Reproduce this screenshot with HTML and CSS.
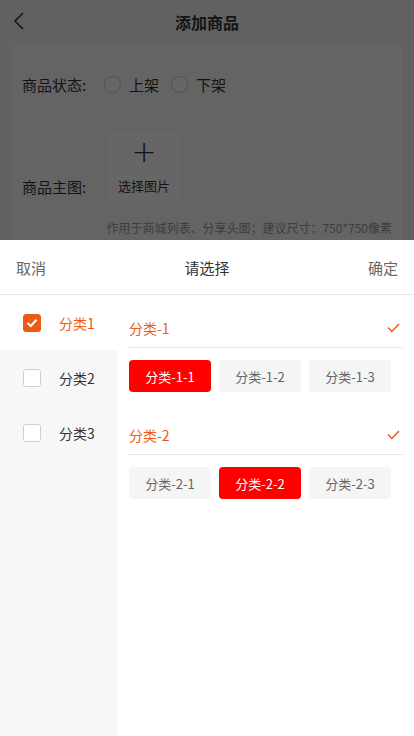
FILE: index.html
```html
<!DOCTYPE html>
<html lang="zh-CN">
<head>
    <meta charset="UTF-8">
    <meta name="viewport" content="width=device-width, initial-scale=1.0">
    <title>添加商品</title>
    <link rel="stylesheet" href="styles.css">
</head>
<body>
    <div class="page">
        <div class="nav-bar">
            <span class="nav-back">
                <svg width="12" height="18" viewBox="0 0 12 18"><polyline points="10,1 2,9 10,17" fill="none" stroke="#333" stroke-width="1.6"/></svg>
            </span>
            <h1 class="nav-title">添加商品</h1>
        </div>
        <div class="form-card">
            <div class="form-row">
                <span class="form-label">商品状态:</span>
                <label class="radio"><span class="radio-dot"></span>上架</label>
                <label class="radio"><span class="radio-dot"></span>下架</label>
            </div>
            <div class="form-row form-row-image">
                <span class="form-label">商品主图:</span>
                <div class="upload-box">
                    <span class="upload-plus">+</span>
                    <span class="upload-text">选择图片</span>
                </div>
            </div>
            <p class="form-hint">作用于商城列表、分享头图；建议尺寸：750*750像素</p>
        </div>
    </div>

    <div class="mask"></div>

    <div class="picker">
        <div class="picker-header">
            <span class="picker-btn">取消</span>
            <span class="picker-title">请选择</span>
            <span class="picker-btn">确定</span>
        </div>
        <div class="picker-body">
            <ul class="side-list" id="side-list"></ul>
            <div class="group-list" id="group-list"></div>
        </div>
    </div>

    <script>
        const categories = [
            { name: '分类1', checked: true, groups: [
                { title: '分类-1', items: ['分类-1-1', '分类-1-2', '分类-1-3'], active: 0 },
                { title: '分类-2', items: ['分类-2-1', '分类-2-2', '分类-2-3'], active: 1 }
            ] },
            { name: '分类2', checked: false },
            { name: '分类3', checked: false }
        ];

        const boxCheck = '<svg width="12" height="10" viewBox="0 0 12 10"><polyline points="1.5,5 4.8,8 10.5,1.8" fill="none" stroke="currentColor" stroke-width="2"/></svg>';
        const lineCheck = '<svg width="13" height="10" viewBox="0 0 13 10"><polyline points="1,4.5 4.8,8.5 12,1" fill="none" stroke="currentColor" stroke-width="1.5"/></svg>';

        const sideList = document.getElementById('side-list');
        categories.forEach(function(cat) {
            const li = document.createElement('li');
            li.className = 'side-item' + (cat.checked ? ' active' : '');
            li.innerHTML = `
                <span class="checkbox">${cat.checked ? boxCheck : ''}</span>
                <span class="side-name">${cat.name}</span>
            `;
            sideList.appendChild(li);
        });

        // Sub categories of the active item
        const groupList = document.getElementById('group-list');
        categories[0].groups.forEach(function(group) {
            const div = document.createElement('div');
            div.className = 'group';
            const chips = group.items.map(function(item, i) {
                return `<span class="chip${i === group.active ? ' selected' : ''}">${item}</span>`;
            }).join('');
            div.innerHTML = `
                <div class="group-title">
                    <span>${group.title}</span>
                    <span class="group-check">${lineCheck}</span>
                </div>
                <div class="chips">${chips}</div>
            `;
            groupList.appendChild(div);
        });
    </script>
</body>
</html>
```

FILE: styles.css
```css
* {
    box-sizing: border-box;
}
body {
    margin: 0;
    font-family: 'Noto Sans CJK SC', 'Liberation Sans', sans-serif;
    color: #333;
    background-color: #f2f2f2;
    height: 736px;
    overflow: hidden;
}
.nav-bar {
    height: 44px;
    display: flex;
    align-items: center;
    justify-content: center;
    position: relative;
    background-color: #f2f2f2;
}
.nav-back {
    position: absolute;
    left: 13px;
    top: 12px;
    display: flex;
}
.nav-title {
    margin: 0;
    font-size: 16px;
    font-weight: bold;
    color: #333;
}
.form-card {
    margin: 0 12px;
    padding: 20px 10px 10px;
    background-color: #fafafa;
    height: 220px;
}
.form-row {
    display: flex;
    align-items: center;
    height: 40px;
    font-size: 15px;
}
.form-label {
    width: 82px;
    color: #333;
}
.radio {
    display: flex;
    align-items: center;
    gap: 8px;
    margin-right: 12px;
    color: #333;
}
.radio-dot {
    width: 17px;
    height: 17px;
    border: 1px solid #c8c8c8;
    border-radius: 50%;
    background-color: #fff;
}
.form-row-image {
    height: auto;
    margin-top: 28px;
    align-items: flex-end;
}
.form-row-image .form-label {
    width: 86px;
    padding-bottom: 3px;
}
.upload-box {
    width: 72px;
    height: 68px;
    background-color: #fff;
    display: flex;
    flex-direction: column;
    align-items: center;
    justify-content: center;
}
.upload-plus {
    font-size: 30px;
    line-height: 28px;
    font-weight: 300;
    color: #333;
    font-family: 'DejaVu Sans', sans-serif;
}
.upload-text {
    margin-top: 10px;
    font-size: 13px;
    color: #333;
}
.form-hint {
    margin: 19px 0 0;
    text-align: right;
    font-size: 12px;
    color: #999;
}
.mask {
    position: fixed;
    left: 0;
    top: 0;
    width: 100%;
    height: 100%;
    background-color: rgba(0, 0, 0, 0.6);
}
.picker {
    position: fixed;
    left: 0;
    bottom: 0;
    width: 100%;
    height: 496px;
    background-color: #fff;
    display: flex;
    flex-direction: column;
}
.picker-header {
    height: 55px;
    padding: 0 16px;
    display: flex;
    align-items: center;
    justify-content: space-between;
    border-bottom: 1px solid #e5e5e5;
    font-size: 15px;
}
.picker-btn {
    color: #666;
}
.picker-title {
    color: #333;
}
.picker-body {
    flex: 1;
    display: flex;
}
.side-list {
    width: 118px;
    margin: 0;
    padding: 0;
    list-style: none;
    background-color: #f7f7f7;
}
.side-item {
    height: 55px;
    padding-left: 23px;
    display: flex;
    align-items: center;
    gap: 18px;
    font-size: 14px;
    color: #333;
}
.side-item.active {
    background-color: #fff;
    color: #ee5a14;
}
.checkbox {
    width: 18px;
    height: 18px;
    border: 1px solid #d0d0d0;
    border-radius: 3px;
    background-color: #fff;
    display: flex;
    align-items: center;
    justify-content: center;
    color: #fff;
}
.side-item.active .checkbox {
    background-color: #ee5a14;
    border-color: #ee5a14;
}
.group-list {
    flex: 1;
    padding: 13px 11px 0;
}
.group {
    margin-bottom: 23px;
}
.group-title {
    height: 40px;
    display: flex;
    align-items: center;
    justify-content: space-between;
    padding-right: 3px;
    border-bottom: 1px solid #e5e5e5;
    font-size: 14px;
    color: #ee5a14;
}
.group-check {
    display: flex;
    color: #ee5a14;
}
.chips {
    margin-top: 12px;
    display: grid;
    grid-template-columns: repeat(3, 82px);
    gap: 8px;
}
.chip {
    height: 32px;
    border-radius: 4px;
    background-color: #f5f5f5;
    color: #666;
    font-size: 13px;
    display: flex;
    align-items: center;
    justify-content: center;
}
.chip.selected {
    background-color: #ff0000;
    color: #fff;
}
```
